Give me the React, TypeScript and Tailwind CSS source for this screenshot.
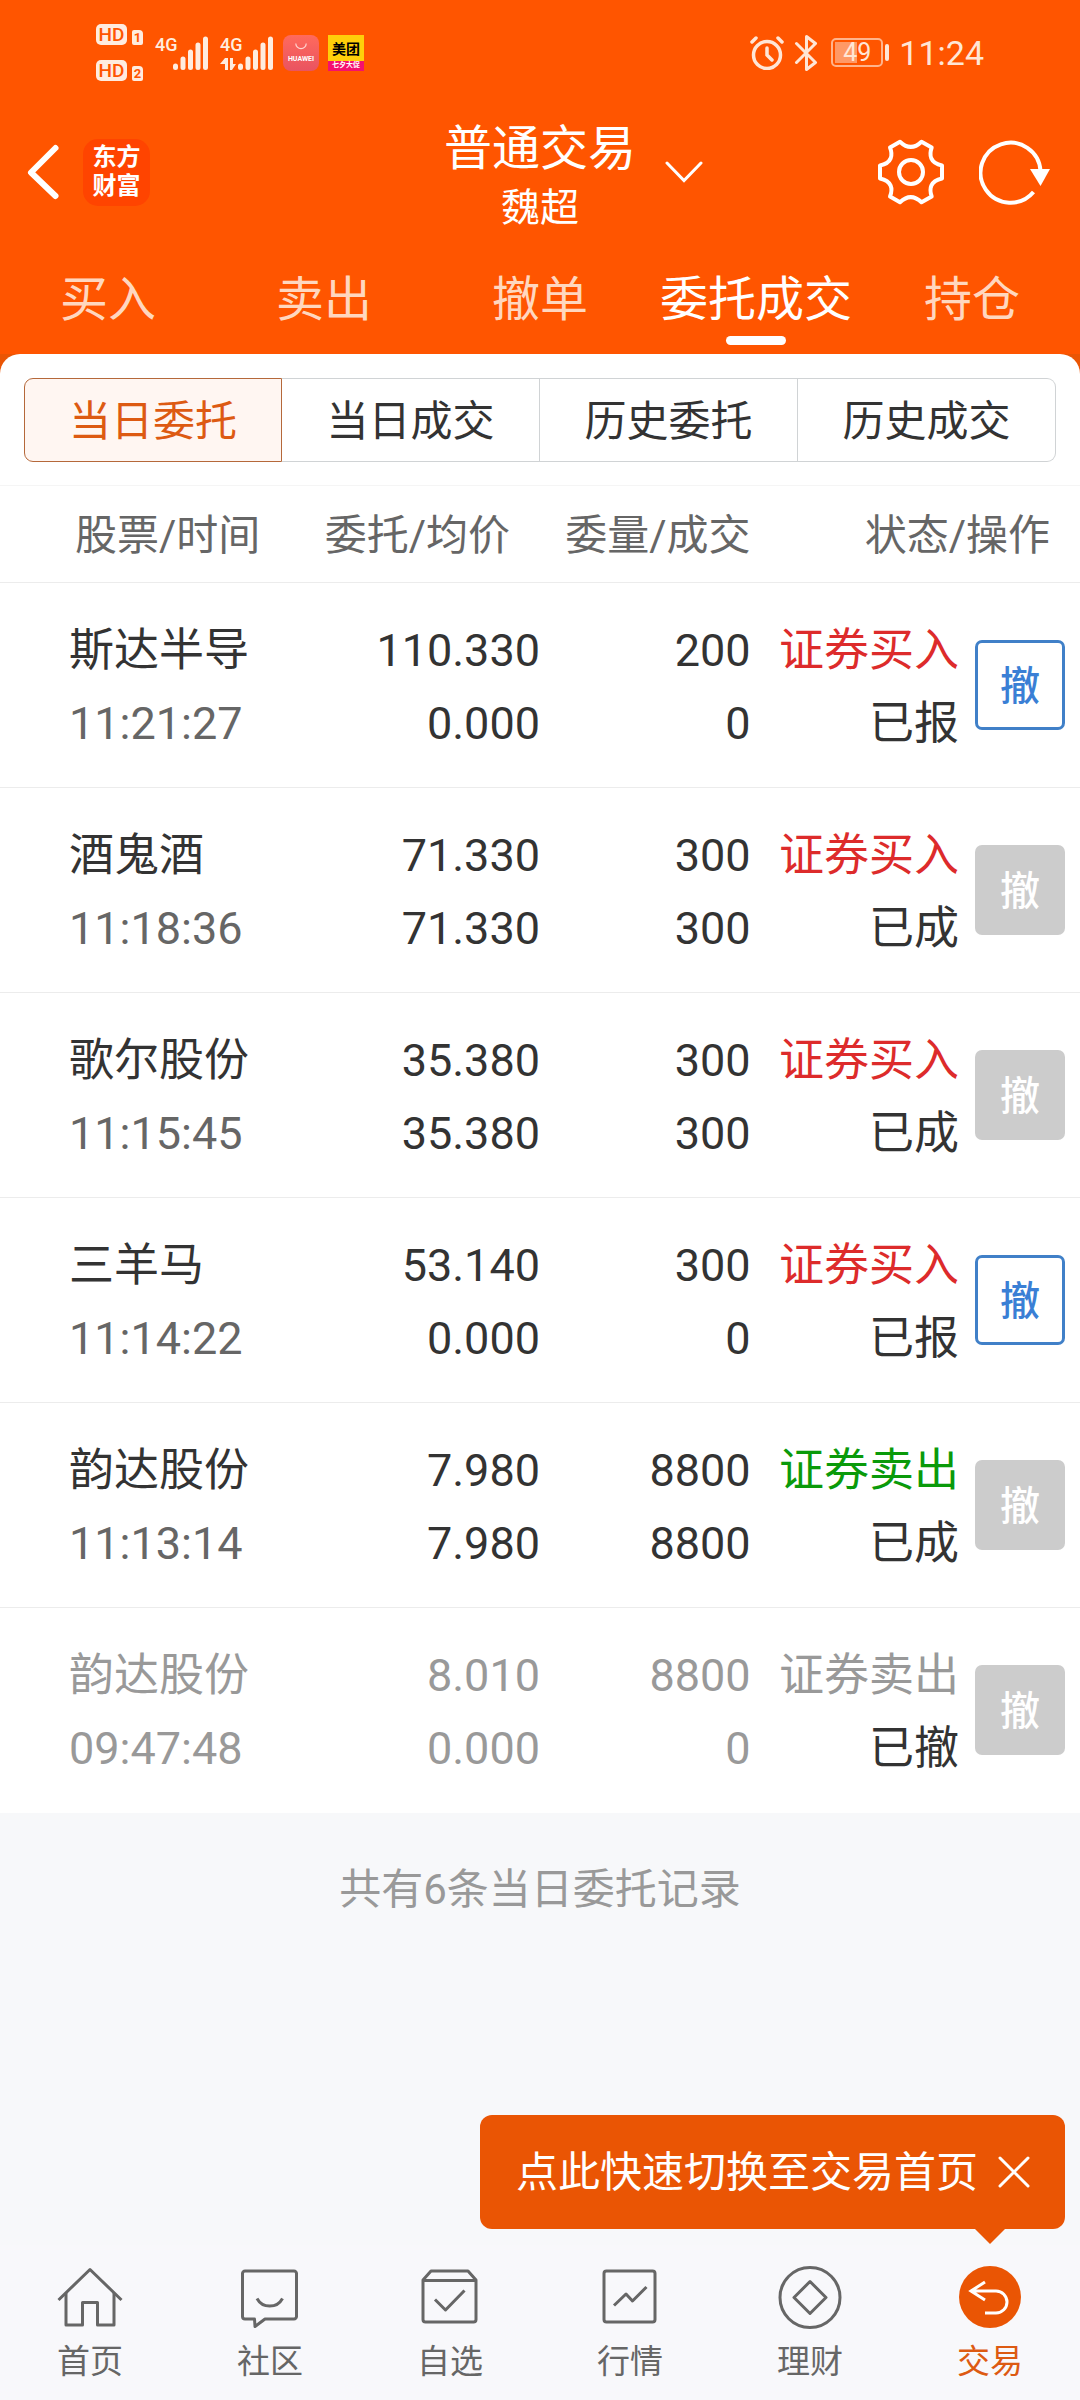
import React from "react";

type Side = "buy" | "sell" | "void";

interface Order {
  name: string;
  time: string;
  price: string;
  avg: string;
  qty: string;
  filled: string;
  side: Side;
  action: string;
  status: string;
  cancellable: boolean;
}

const orders: Order[] = [
  { name: "斯达半导", time: "11:21:27", price: "110.330", avg: "0.000", qty: "200", filled: "0", side: "buy", action: "证券买入", status: "已报", cancellable: true },
  { name: "酒鬼酒", time: "11:18:36", price: "71.330", avg: "71.330", qty: "300", filled: "300", side: "buy", action: "证券买入", status: "已成", cancellable: false },
  { name: "歌尔股份", time: "11:15:45", price: "35.380", avg: "35.380", qty: "300", filled: "300", side: "buy", action: "证券买入", status: "已成", cancellable: false },
  { name: "三羊马", time: "11:14:22", price: "53.140", avg: "0.000", qty: "300", filled: "0", side: "buy", action: "证券买入", status: "已报", cancellable: true },
  { name: "韵达股份", time: "11:13:14", price: "7.980", avg: "7.980", qty: "8800", filled: "8800", side: "sell", action: "证券卖出", status: "已成", cancellable: false },
  { name: "韵达股份", time: "09:47:48", price: "8.010", avg: "0.000", qty: "8800", filled: "0", side: "void", action: "证券卖出", status: "已撤", cancellable: false },
];

const sideColor: Record<Side, string> = {
  buy: "text-[#dd2b2b]",
  sell: "text-[#0a9a0a]",
  void: "text-[#999999]",
};

function HdBadge({ sim }: { sim: string }) {
  return (
    <div className="flex items-end gap-[5px]">
      <span className="flex h-[21px] w-[31px] items-center justify-center rounded-[5px] bg-[#ffecdf] text-[19px] leading-none font-medium text-[#ff5500]">
        HD
      </span>
      <span className="flex h-[15px] w-[11px] items-center justify-center rounded-[2px] rounded-tr-[4px] bg-[#ffecdf] text-[13px] leading-none font-bold text-[#ff5500]">
        {sim}
      </span>
    </div>
  );
}

function Signal({ data }: { data?: boolean }) {
  return (
    <div className="flex h-[34px] items-end">
      <div className="flex h-full w-[18px] flex-col justify-between">
        <span className="text-[18px] leading-[18px] font-medium text-[#ffecdf]">4G</span>
        {data && (
          <svg viewBox="0 0 16 12" className="h-[12px] w-[16px]" fill="#ffecdf">
            <path d="M5 0h3v12H5V6H0z" />
            <path d="M10 0h3v6h3l-4 6h-2z" />
          </svg>
        )}
      </div>
      <svg viewBox="0 0 35 34" className="h-[34px] w-[35px]" stroke="#ffecdf" strokeWidth="5" strokeLinecap="round">
        <path d="M2.500 30v1.500M10 23v8.500M17.500 16v15.500M25 9v22.500M32.500 3v28.500" />
      </svg>
    </div>
  );
}

function StatusBar() {
  return (
    <div className="flex h-[105px] items-center justify-between px-24">
      <div className="flex items-center">
        <div className="flex flex-col gap-[15px]">
          <HdBadge sim="1" />
          <HdBadge sim="2" />
        </div>
        <div className="ml-3 flex items-center gap-3">
          <Signal />
          <Signal data />
        </div>
        <div className="ml-[10px] flex h-9 w-9 flex-col items-center justify-center rounded-[8px] bg-gradient-to-b from-[#ff6a5c] to-[#e95361]">
          <svg viewBox="0 0 12 7" className="h-[7px] w-[12px]" fill="none" stroke="#ffd5d0" strokeWidth="1.200">
            <path d="M.8 .5a5.200 5.200 0 0 0 10.400 0" />
          </svg>
          <span className="mt-[6px] text-[7px] leading-[7px] font-bold text-white">HUAWEI</span>
        </div>
        <div className="ml-[9px] flex h-9 w-9 flex-col bg-[#ffcf0a] text-center">
          <span className="h-[26px] text-[14px] leading-[29px] font-bold text-black">美团</span>
          <span className="h-[10px] bg-[#f5106e] text-[7px] leading-[9px] font-bold text-white">七夕大促</span>
        </div>
      </div>
      <div className="flex items-center text-[#ffe6d6]">
        <svg viewBox="0 0 34 34" className="h-[34px] w-[34px]" fill="none" stroke="currentColor" strokeWidth="3.500" strokeLinecap="round">
          <circle cx="17" cy="19" r="13.500" />
          <path d="M17 12v7l5 5M2 6l4-4M32 6l-4-4" />
        </svg>
        <svg viewBox="0 0 24 36" className="ml-[10px] h-[36px] w-[24px]" fill="none" stroke="currentColor" strokeWidth="3" strokeLinejoin="round" strokeLinecap="round">
          <path d="M2.500 8.500l19 19-9 7V1.500l9 7-19 19" />
        </svg>
        <div className="ml-[13px] flex h-[29px] w-[52px] items-center rounded-[5px] border-2 border-[#ffb48c] p-[2px]">
          <span className="flex h-full w-full items-center justify-center bg-[linear-gradient(90deg,#ff9966_50%,transparent_50%)] text-[25px] leading-none">
            49
          </span>
        </div>
        <span className="ml-[2px] h-[17px] w-[4px] rounded-[2px] bg-[#ffe6d6]" />
        <span className="ml-[10px] text-[34px] leading-none">11:24</span>
      </div>
    </div>
  );
}

function TitleBar() {
  return (
    <div className="grid h-[134px] grid-cols-[1fr_auto_1fr] items-center text-white">
      <div className="flex items-center">
        <button type="button" aria-label="返回" className="pl-[25px]">
          <svg viewBox="0 0 36 58" className="h-[58px] w-[36px]" fill="none" stroke="currentColor" strokeWidth="6" strokeLinecap="round" strokeLinejoin="round">
            <path d="M30.500 5L6 29.500L30.500 53" />
          </svg>
        </button>
        <div className="ml-[22px] flex h-[67px] w-[67px] flex-col items-center justify-center rounded-[15px] bg-[#ff4400] text-[24px] leading-[29px] font-bold">
          <span>东方</span>
          <span>财富</span>
        </div>
      </div>
      <h1 className="flex flex-col items-center pt-1">
        <span className="text-[48px] leading-[68px]">普通交易</span>
        <span className="text-[39px] leading-[50px]">魏超</span>
      </h1>
      <div className="flex items-center pr-[29px]">
        <button type="button" aria-label="切换账户" className="ml-[29px]">
          <svg viewBox="0 0 38 22" className="h-[22px] w-[38px]" fill="none" stroke="currentColor" strokeWidth="3" strokeLinecap="round">
            <path d="M2 2l17 17.500L36 2" />
          </svg>
        </button>
        <button type="button" aria-label="设置" className="ml-auto">
          <svg viewBox="0 0 68 68" className="h-[68px] w-[68px]" fill="none" stroke="currentColor" strokeWidth="4" strokeLinejoin="round">
            <path d="M23 3.700C30 10.500 37.500 10.500 44.500 3.700L54.700 9.500C52 17 53 25 65 27.500V40.500C53 43 52 51 54.700 58.500L44.500 64.300C37.500 57.500 30 57.500 23 64.300L13 58.500C16 51 15 43 3 40.500V27.500C15 25 16 17 13 9.500Z" />
            <circle cx="34" cy="34" r="12" />
          </svg>
        </button>
        <button type="button" aria-label="刷新" className="ml-[34px]">
          <svg viewBox="0 0 72 68" className="h-[68px] w-[72px]" fill="none" stroke="currentColor" strokeWidth="4">
            <path d="M61.500 33A30 30 0 1 0 54.500 54" />
            <path d="M51 31h20L61.500 48z" fill="currentColor" stroke="none" />
          </svg>
        </button>
      </div>
    </div>
  );
}

function MainTabs() {
  const tabs = ["买入", "卖出", "撤单", "委托成交", "持仓"];
  return (
    <nav className="grid grid-cols-5">
      {tabs.map((t) => {
        const active = t === "委托成交";
        return (
          <a key={t} href="#" className={`flex flex-col items-center pt-[37px] pb-[9px] text-[48px] leading-[48px] ${active ? "text-white" : "text-[#ffd7bf]"}`}>
            <span>{t}</span>
            <span className={`mt-3 h-[9px] w-[60px] rounded-full ${active ? "bg-white" : "bg-transparent"}`} />
          </a>
        );
      })}
    </nav>
  );
}

function Segments() {
  const items = ["当日委托", "当日成交", "历史委托", "历史成交"];
  return (
    <div className="flex px-6 pt-6 pb-[23px]">
      {items.map((t, i) => (
        <button
          key={t}
          type="button"
          aria-pressed={i === 0}
          className={`h-[84px] w-1/4 border pt-1 text-[42px] leading-[42px] first:rounded-l-[9px] last:rounded-r-[9px] ${
            i === 0 ? "border-[#b5683a] bg-[#fff6f2] text-[#dd5a12]" : "border-l-0 border-[#d0d3d5] text-[#333333]"
          }`}
        >
          {t}
        </button>
      ))}
    </div>
  );
}

function OrderRow({ o }: { o: Order }) {
  const ink = o.side === "void" ? "text-[#999999]" : "text-[#333333]";
  return (
    <tr className="h-[205px] border-b border-[#ececec] last:border-b-0">
      <td className="pt-1 pl-[69px] text-left">
        <div className={ink}>{o.name}</div>
        <div className={o.side === "void" ? "text-[#999999]" : "text-[#666666]"}>{o.time}</div>
      </td>
      <td className={`pt-1 ${ink}`}>
        <div>{o.price}</div>
        <div>{o.avg}</div>
      </td>
      <td className={`pt-1 ${ink}`}>
        <div>{o.qty}</div>
        <div>{o.filled}</div>
      </td>
      <td className="pt-1 whitespace-nowrap">
        <div className={sideColor[o.side]}>{o.action}</div>
        <div className="text-[#333333]">{o.status}</div>
      </td>
      <td className="pr-[15px]">
        <button
          type="button"
          disabled={!o.cancellable}
          className={`ml-auto block h-[90px] w-[90px] rounded-[7px] pt-1 text-[40px] leading-[42px] font-medium ${
            o.cancellable ? "border-[3px] border-[#4080c8] bg-white text-[#3a7fd5]" : "bg-[#cccccc] text-white"
          }`}
        >
          撤
        </button>
      </td>
    </tr>
  );
}

function Orders() {
  return (
    <table className="w-full table-fixed border-collapse bg-white text-right text-[45px] leading-[73px]">
      <colgroup>
        <col className="w-[28%]" />
        <col className="w-[22%]" />
        <col className="w-[19.500%]" />
        <col className="w-[19.300%]" />
        <col />
      </colgroup>
      <thead>
        <tr className="h-[97px] border-t border-b border-t-[#f5f5f5] border-b-[#ececec] text-[42px] leading-[42px] text-[#666666]">
          <th className="pt-1 pl-[75px] text-left font-normal whitespace-nowrap">股票/时间</th>
          <th className="pt-1 pr-[30px] font-normal whitespace-nowrap">委托/均价</th>
          <th className="pt-1 font-normal whitespace-nowrap">委量/成交</th>
          <th colSpan={2} className="pt-1 pr-[30px] font-normal whitespace-nowrap">状态/操作</th>
        </tr>
      </thead>
      <tbody>
        {orders.map((o) => (
          <OrderRow key={o.time} o={o} />
        ))}
      </tbody>
    </table>
  );
}

const navItems = [
  {
    label: "首页",
    icon: (
      <>
        <path d="M1.500 36L33 5.500L64.500 36" />
        <path d="M9 29V61H25.500V38.500H40.500V61H57V29" />
      </>
    ),
  },
  {
    label: "社区",
    icon: (
      <>
        <path d="M17.500 55H8a2.500 2.500 0 0 1-2.500-2.500V9.500A2.500 2.500 0 0 1 8 7H57a2.500 2.500 0 0 1 2.500 2.500V52.500A2.500 2.500 0 0 1 57 55H28L18 62.500Z" />
        <path d="M20 34.500a14.500 14.500 0 0 0 25.500 0" />
      </>
    ),
  },
  {
    label: "自选",
    icon: (
      <>
        <path d="M6 16L14 7H51L59 16V55.500A2.500 2.500 0 0 1 56.500 58H8.500A2.500 2.500 0 0 1 6 55.500ZM6 16.500H59" />
        <path d="M18 35.500L28.500 46L47.500 26.500" />
      </>
    ),
  },
  {
    label: "行情",
    icon: (
      <>
        <rect x="7" y="7" width="51" height="51" rx="2.500" />
        <path d="M17 41.500L29 30L35.500 37L49.500 23" />
      </>
    ),
  },
  {
    label: "理财",
    icon: (
      <>
        <circle cx="33" cy="33.500" r="30" />
        <path d="M33 17.500L49 33.500L33 49.500L17 33.500Z" />
      </>
    ),
  },
  {
    label: "交易",
    icon: (
      <>
        <circle cx="33" cy="33" r="31" fill="#ea5504" stroke="none" />
        <path d="M28 18L14 27L28 36M14 27H39a11 11 0 0 1 0 22H28" stroke="#fff" strokeLinejoin="miter" />
      </>
    ),
  },
];

function BottomNav() {
  return (
    <footer className="relative mt-auto">
      <div className="absolute right-[15px] bottom-full mb-4 flex h-[114px] items-center rounded-[12px] bg-[#ea5504] pr-[35px] pl-9 text-white">
        <a href="#" className="pt-[2px] text-[42px] leading-[42px] whitespace-nowrap">点此快速切换至交易首页</a>
        <button type="button" aria-label="关闭" className="ml-5">
          <svg viewBox="0 0 32 32" className="h-[32px] w-[32px]" fill="none" stroke="currentColor" strokeWidth="3" strokeLinecap="round">
            <path d="M2 2L30 30M30 2L2 30" />
          </svg>
        </button>
        <svg viewBox="0 0 30 15" className="absolute top-full right-[60px] h-[15px] w-[30px]" fill="#ea5504">
          <path d="M0 0H30L15 15Z" />
        </svg>
      </div>
      <nav className="grid grid-cols-6 bg-[#f8f8fb]">
        {navItems.map((n) => (
          <a key={n.label} href="#" className={`flex flex-col items-center pt-[19px] pb-[18px] text-[33px] leading-[40px] ${n.label === "交易" ? "text-[#dd5a12]" : "text-[#666666]"}`}>
            <svg viewBox="0 0 66 66" className="mb-3 h-[66px] w-[66px]" fill="none" stroke="#666666" strokeWidth="3" strokeLinejoin="round">
              {n.icon}
            </svg>
            {n.label}
          </a>
        ))}
      </nav>
    </footer>
  );
}

export default function App() {
  return (
    <div className="flex min-h-screen flex-col bg-[#f7f8fa] font-[Roboto,'Noto_Sans_CJK_SC',sans-serif]">
      <header className="bg-[#ff5500]">
        <StatusBar />
        <TitleBar />
        <MainTabs />
      </header>
      <main>
        <div className="bg-[linear-gradient(#ea5504_24px,#ffffff_24px)]">
          <div className="rounded-t-[20px] bg-white">
            <Segments />
          </div>
        </div>
        <Orders />
        <p className="pt-[53px] text-center text-[42px] leading-[48px] text-[#999999]">共有6条当日委托记录</p>
      </main>
      <BottomNav />
    </div>
  );
}
